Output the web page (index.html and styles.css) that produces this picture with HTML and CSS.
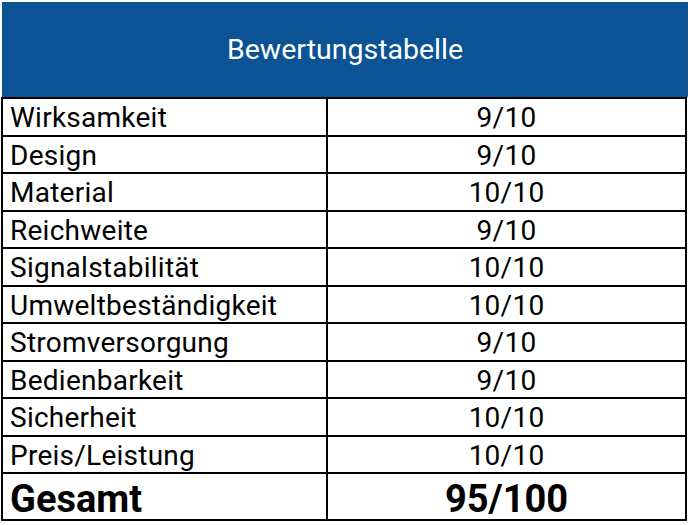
FILE: index.html
```html
<!DOCTYPE html>
<html lang="de">
<head>
<meta charset="utf-8">
<link rel="stylesheet" href="styles.css">
</head>
<body>
<div class="sheet">
  <div class="title">Bewertungstabelle</div>
  <div class="grid">
    <div class="cell name">Wirksamkeit</div><div class="cell val">9/10</div>
    <div class="cell name">Design</div><div class="cell val">9/10</div>
    <div class="cell name">Material</div><div class="cell val">10/10</div>
    <div class="cell name">Reichweite</div><div class="cell val">9/10</div>
    <div class="cell name">Signalstabilität</div><div class="cell val">10/10</div>
    <div class="cell name">Umweltbeständigkeit</div><div class="cell val">10/10</div>
    <div class="cell name">Stromversorgung</div><div class="cell val">9/10</div>
    <div class="cell name">Bedienbarkeit</div><div class="cell val">9/10</div>
    <div class="cell name">Sicherheit</div><div class="cell val">10/10</div>
    <div class="cell name">Preis/Leistung</div><div class="cell val">10/10</div>
    <div class="cell name total">Gesamt</div><div class="cell val total">95/100</div>
  </div>
</div>
</body>
</html>
```
FILE: styles.css
```css
html, body {
  margin: 0;
  padding: 0;
  background: #ffffff;
}
body {
  font-family: Roboto, "Liberation Sans", sans-serif;
  color: #000000;
}
.sheet {
  padding-top: 2px;
  padding-left: 1px;
  width: 686px;
}
.title {
  margin-left: 1px;
  width: 686px;
  height: 95px;
  background: #0b5394;
  color: #ffffff;
  font-size: 28.5px;
  display: flex;
  align-items: center;
  justify-content: center;
}
.grid {
  display: grid;
  grid-template-columns: 323px 357px;
  grid-template-rows: repeat(10, 35.5px) 45px;
  gap: 2px;
  padding: 2px;
  background: #000000;
  width: 682px;
}
.cell {
  background: #ffffff;
  display: flex;
  align-items: center;
  font-size: 28px;
  letter-spacing: 0.25px;
  line-height: 1;
  padding-top: 3px;
  box-sizing: border-box;
}
.name {
  padding-left: 7px;
}
.val {
  justify-content: center;
}
.total {
  font-weight: 700;
  font-size: 38px;
  letter-spacing: 0;
  padding-top: 4px;
}
```
